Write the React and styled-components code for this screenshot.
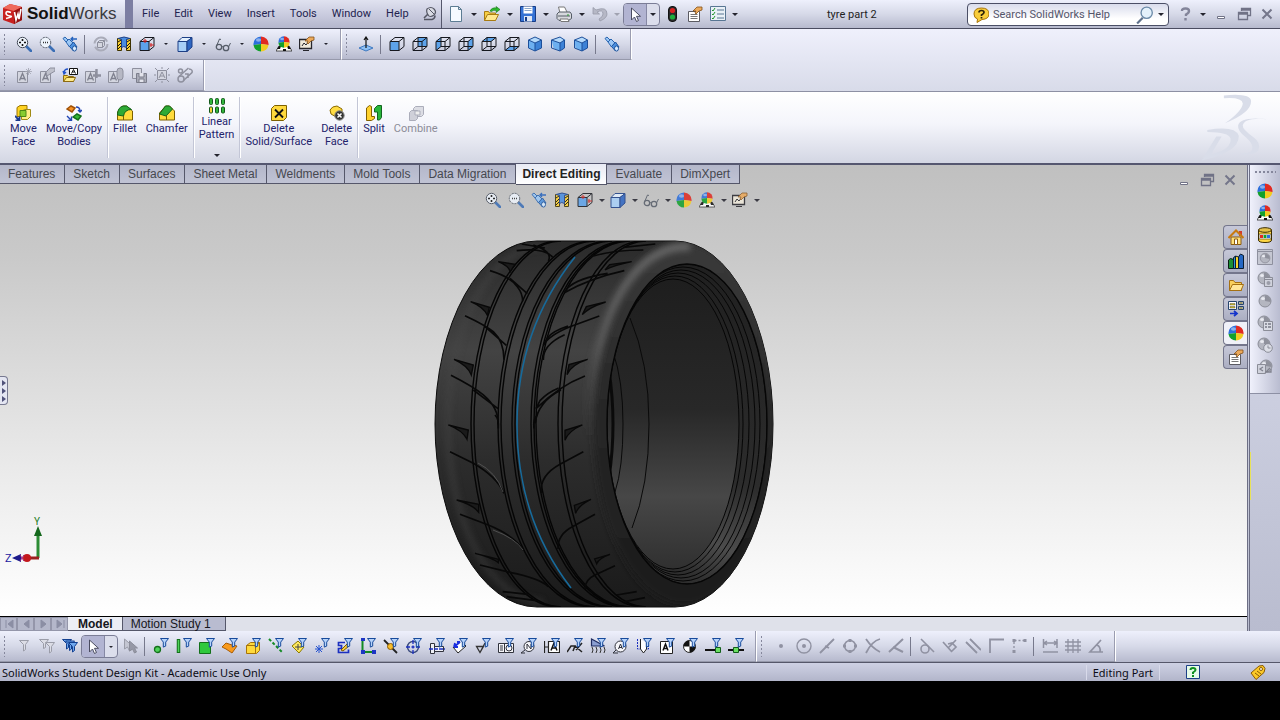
import React, { useState } from 'react';
import styled, { createGlobalStyle, css } from 'styled-components';

const GlobalStyle = createGlobalStyle`
  * {
    box-sizing: border-box;
  }
  body {
    margin: 0;
    background: #000;
    font-family: Roboto, "Noto Sans", sans-serif;
    font-size: 11px;
    color: #23234f;
  }
  button, input {
    font: inherit;
    color: inherit;
  }
`;

const barGradient = 'linear-gradient(#eef0fc, #d6d9e8 50%, #b7bace)';

const Page = styled.div`
  display: flex;
  flex-direction: column;
  min-height: 100vh;
  padding-bottom: 40px;
`;

const TitleBar = styled.header`
  display: flex;
  height: 29px;
  background: ${barGradient};
  border-bottom: 1px solid #4a4c60;
`;

const Brand = styled.div`
  display: flex;
  align-items: center;
  gap: 4px;
  width: 133px;
  padding-left: 2px;
  border-right: 8px solid #7c7ea2;
  font-family: "Liberation Sans", Arial, sans-serif;
  font-size: 17px;
  color: #3a3a40;

  b {
    color: #111;
  }
`;

const MenuBar = styled.nav`
  display: flex;
  align-items: center;
  gap: 1px;
  width: 309px;
  padding-left: 2px;
  background: linear-gradient(#e0e2f0, #c6c8dc 60%, #b4b6cc);
  border-right: 1px solid #55576c;
`;

const MenuItem = styled.button`
  padding: 0 7px;
  border: 0;
  background: none;
  line-height: 28px;
`;

const PinButton = styled.button`
  display: flex;
  padding: 0;
  border: 0;
  background: none;
  margin-left: auto;
  margin-right: 4px;
`;

const QuickBar = styled.div`
  display: flex;
  align-items: center;
  padding-left: 2px;
`;

const IconButton = styled.button`
  display: flex;
  flex: none;
  align-items: center;
  justify-content: center;
  width: 23px;
  height: 22px;
  padding: 0;
  border: 0;
  background: none;
`;

const DropButton = styled.button`
  display: flex;
  flex: none;
  align-items: center;
  justify-content: center;
  width: ${props => props.$width || 15}px;
  height: 22px;
  padding: 0;
  border: 0;
  background: none;

  &::after {
    content: '';
    border: ${props => (props.$small ? 2 : 3)}px solid transparent;
    border-bottom: 0;
    border-top-color: ${props => (props.$muted ? '#a0a2b0' : '#24242e')};
  }
`;

const SelectGroup = styled.div`
  display: flex;
  width: 37px;
  height: 23px;
  border: 1px solid #7b7d96;
  border-radius: 4px;
  background: #dcdeec;
  overflow: hidden;

  ${IconButton} {
    background: #b2b4d2;
    border-right: 1px solid #8688a4;
  }
`;

const DocTitle = styled.h1`
  flex: 1;
  margin: 0;
  padding-left: 86px;
  line-height: 29px;
  font-size: 11px;
  font-weight: 400;
  color: #222;
`;

const SearchBox = styled.label`
  display: flex;
  align-items: center;
  align-self: flex-start;
  width: 202px;
  height: 23px;
  margin-top: 3px;
  padding-left: 5px;
  border: 1px solid #4b4f66;
  border-radius: 4px;
  background: linear-gradient(#d9dcec, #fff 70%);

  input {
    flex: 1;
    min-width: 0;
    padding: 0 0 0 4px;
    border: 0;
    background: none;
    outline: 0;
  }
  input::placeholder {
    color: #55566a;
    opacity: 1;
  }
`;

const WindowButtons = styled.div`
  display: flex;
  align-items: center;
  padding-left: 4px;
  padding-right: 2px;
`;

const Dock = styled.div`
  background: linear-gradient(#eff0fc, #d8dbe9);
  border-bottom: 1px solid #8d90a4;
`;

const DockRow = styled.div`
  display: flex;
  height: 31px;
`;

const Toolbar = styled.div`
  display: flex;
  align-items: center;
  padding-right: ${props => props.$end || 8}px;
  background: ${barGradient};
  border-right: 1px solid #fff;
  border-bottom: 1px solid #9699ab;
  box-shadow: inset -1px 0 #9a9cb0;
`;

const Grip = styled.span`
  width: 12px;
  height: 22px;
  background: radial-gradient(circle, #85879c 1px, transparent 1px) 2px 0 / 5px 4px repeat-y;
`;

const Separator = styled.span`
  width: 8px;
  height: 19px;
  background: linear-gradient(#77798c, #77798c) 3px 0 / 1px 100% no-repeat;
`;

const Ribbon = styled.div`
  display: flex;
  height: 73px;
  padding-left: 6px;
  background: linear-gradient(#fff, #f4f5fb 45%, #d3d6e3);
  border-bottom: 2px solid #555770;
`;

const RibbonButton = styled.button`
  display: flex;
  flex-direction: column;
  align-items: center;
  gap: 1px;
  padding: ${props => (props.$tall ? 6 : 13)}px 5px 0 4px;
  border: 0;
  background: none;
  line-height: 13px;
  white-space: pre;
  text-align: center;
  color: #23236b;

  &:disabled {
    color: #8c8c98;
  }
`;

const RibbonArrow = styled.span`
  margin-top: 12px;
  border: 3px solid transparent;
  border-top-color: #24242e;
`;

const RibbonDivider = styled.span`
  width: 2px;
  margin: 5px 0;
  background: linear-gradient(to right, #c3c6d6 1px, #fff 1px);
`;

const Watermark = styled.svg`
  margin-left: auto;
  margin-right: 8px;
`;

const Workspace = styled.main`
  display: flex;
  flex: 1;
`;

const ModelColumn = styled.div`
  display: flex;
  flex-direction: column;
  flex: 1;
  min-width: 0;
`;

const Viewport = styled.section`
  display: flex;
  flex-direction: column;
  flex: 1;
  background: linear-gradient(#c0c0c0, #c9c9c9 20%, #ececec 70%, #fff);
`;

const TabRow = styled.div`
  display: flex;
  align-items: flex-start;
  height: 24px;
`;

const CommandTab = styled.button`
  height: 19px;
  padding: 0 9px 0 8px;
  border: 1px solid #55576a;
  border-width: 0 1px 1px 0;
  background: linear-gradient(#b4b7ca, #c0c3d4);
  font-family: "Liberation Sans", Arial, sans-serif;
  font-size: 12px;
  line-height: 17px;
  color: #46484f;
  white-space: nowrap;

  ${props => props.$active && css`
    height: 21px;
    padding: 0 6px;
    margin-top: -1px;
    background: linear-gradient(#e8eaf4, #fff);
    font-weight: 700;
    line-height: 19px;
    color: #222;
  `}
`;

const ModelWindowButtons = styled.div`
  display: flex;
  margin-left: auto;
  padding: 4px 6px 0 0;
`;

const HeadsUpBar = styled.div`
  display: flex;
  align-items: center;
  justify-content: center;
  height: 22px;
  padding-right: 4px;
  opacity: 0.85;
`;

const Scene = styled.div`
  display: flex;
  flex: 1;
`;

const SceneEdge = styled.div`
  display: flex;
  flex-direction: column;
  justify-content: space-between;
  width: 44px;
  padding: 165px 0 52px;
`;

const PanelHandle = styled.button`
  display: flex;
  flex-direction: column;
  align-items: center;
  justify-content: center;
  gap: 2px;
  width: 8px;
  height: 29px;
  padding: 0;
  border: 1px solid #777991;
  border-left: 0;
  border-radius: 0 4px 4px 0;
  background: #e4e6f2;

  span {
    border: 3px solid transparent;
    border-left: 4px solid #50527a;
    border-right: 0;
  }
`;

const Stage = styled.div`
  display: flex;
  flex: 1;
  align-items: flex-end;
  justify-content: center;
  padding: 24px 57px 6px 0;
`;

const SideTabs = styled.div`
  display: flex;
  flex-direction: column;
  width: 24px;
  padding-top: 14px;
`;

const SideTab = styled.button`
  display: flex;
  align-items: center;
  justify-content: center;
  width: 24px;
  height: 24px;
  padding: 0;
  border: 1px solid #74768c;
  border-right: 0;
  border-radius: 4px 0 0 4px;
  background: ${props => (props.$active ? '#f0f1f8' : 'linear-gradient(#c6c8d8, #abaec2)')};
`;

const StudyRow = styled.div`
  display: flex;
  height: 15px;
  background: #dfe1ea;
  border-top: 1px solid #000;
`;

const StudyNav = styled.button`
  display: flex;
  align-items: center;
  justify-content: center;
  width: 17px;
  height: 14px;
  padding: 0;
  border: 1px solid #9496aa;
  background: #b4b7ca;
`;

const StudyTab = styled.button`
  height: 14px;
  padding: 0 ${props => (props.$active ? 9 : 14)}px 0 ${props => (props.$active ? 10 : 8)}px;
  border: 1px solid #55576a;
  border-width: 0 1px 1px 0;
  background: ${props => (props.$active ? '#eceef5' : '#b9bcd0')};
  font-family: "Liberation Sans", Arial, sans-serif;
  font-size: 12px;
  font-weight: ${props => (props.$active ? 700 : 400)};
  line-height: 12px;
  color: #16161c;
`;

const RenderPanel = styled.aside`
  width: 33px;
  border-left: 3px double #6c6e84;
  background: linear-gradient(#dee1f0, #b9bccf);
`;

const RenderTools = styled.div`
  display: flex;
  flex-direction: column;
  align-items: center;
  height: 229px;
  padding-top: 5px;
  background: linear-gradient(to right, #f0f1fc, #b9bcd0);
  border-bottom: 1px solid #8d90a4;
`;

const RenderGrip = styled.span`
  width: 22px;
  height: 5px;
  margin-bottom: 5px;
  background: radial-gradient(circle, #85879c 1px, transparent 1px) 0 0 / 4px 4px repeat-x;
`;

const HintEdge = styled.div`
  width: 1px;
  height: 48px;
  margin-top: 58px;
  background: #e8e25a;
`;

const BottomBar = styled.div`
  display: flex;
  height: 31px;
  background: ${barGradient};
`;

const StatusBar = styled.footer`
  display: flex;
  align-items: center;
  height: 19px;
  padding: 0 14px 0 2px;
  border-top: 1px solid #55576a;
  background: linear-gradient(#ced1e4, #b2b5ca);
  font-family: "Noto Sans", sans-serif;
  color: #0c0c14;
`;

const StatusMode = styled.span`
  margin-left: auto;
  padding: 0 6px;
  border: 1px solid #d8daea;
  border-width: 0 1px;
`;

const StatusIcon = styled.button`
  display: flex;
  padding: 0;
  border: 0;
  background: none;
  margin-left: ${props => props.$gap}px;
`;

// ---- shared icon parts ----

const Glass = ({ dashed }) => (
  <>
    <path d="M10 10l5 5" stroke="#3a6eb5" strokeWidth="2.6" strokeLinecap="round" />
    <circle cx="6.5" cy="6.5" r="5.2" fill="#eef4fc" stroke="#444b58" strokeDasharray={dashed ? '2 1' : undefined} />
  </>
);

const Funnel = () => (
  <path d="M7.500 .5h8l-2.800 3.600v4l-2.400 1v-5z" fill="#b5d2fa" stroke="#174a9c" />
);

const Sphere = () => (
  <>
    <path d="M8 8V.5A7.500 7.500 0 0 0 .5 9z" fill="#2c6fdc" />
    <path d="M8 8V.5A7.500 7.500 0 0 1 15.500 9z" fill="#e02a22" />
    <path d="M8 8L.5 9A7.500 7.500 0 0 0 8 15.500z" fill="#12a02c" />
    <path d="M8 8l7.500 1A7.500 7.500 0 0 1 8 15.500z" fill="#f2cc20" />
    <ellipse cx="5.500" cy="4" rx="2.600" ry="1.800" fill="#fff" opacity=".45" />
  </>
);

const SceneSphere = () => (
  <>
    <path d="M0 15l3-5h10l3 5z" fill="#fff" stroke="#111" strokeWidth=".7" />
    <path d="M3 10h2l-1 3H1zM7 13h3v2H7zM11 10h2l2 3h-3z" fill="#111" />
    <g transform="translate(2 0) scale(.75)"><Sphere /></g>
  </>
);

const GreySphere = () => (
  <>
    <circle cx="7" cy="7" r="6" fill="#b4b6c0" stroke="#8b8d98" />
    <path d="M7 7V1.500A5.500 5.500 0 0 1 12.500 8z" fill="#8f919c" />
    <ellipse cx="5" cy="4.500" rx="2" ry="1.500" fill="#e9eaf0" />
  </>
);

const cubeFaces = {
  front: 'M1 5.500h9v9H1z',
  back: 'M6 1.500h9v9H6z',
  left: 'M1 5.500l5-4v9l-5 4z',
  right: 'M10 5.500l5-4v9l-5 4z',
  top: 'M1 5.500l5-4h9l-5 4z',
  bottom: 'M1 14.500l5-4h9l-5 4z',
};

const WireCube = ({ face }) => (
  <>
    <path d={cubeFaces[face]} fill="#5da3ea" />
    <path d="M1 5.500h9v9H1zM6 1.500h9v9M1 5.500l5-4M10 5.500l5-4M10 14.500l5-4" fill="none" stroke="#16181f" />
    {face !== 'front' && <path d="M6 1.500v9h9M1 14.500l5-4" fill="none" stroke="#16181f" />}
  </>
);

const IsoCube = ({ x = 8 }) => (
  <>
    <path d={`M1.500 4L${x} 1l6.500 3L${x} 7z`} fill="#b5dafb" />
    <path d={`M1.500 4L${x} 7v8l-6.500-3z`} fill="#6db0f0" />
    <path d={`M14.500 4L${x} 7v8L14.500 12z`} fill="#3d82d6" />
    <path d={`M1.500 4L${x} 1L14.500 4v8L${x} 15L1.500 12zM1.500 4L${x} 7L14.500 4M${x} 7v8`} fill="none" stroke="#1d4f9a" />
  </>
);

const Telescope = () => (
  <>
    <path d="M1 2.500L3 1l3 3-2 2zM4 6l3-3 4 4-3.500 4z" fill="#9cc8f6" stroke="#2a65b0" />
    <path d="M7.500 10.500l4-4.500L15 11l-3.500 4z" fill="#4c91e0" stroke="#1e559e" />
    <ellipse cx="12.500" cy="12.500" rx="2" ry="2.600" fill="#d7ebff" stroke="#1e559e" />
  </>
);

const NoteBox = ({ x = 1, y = 4 }) => (
  <>
    <path d={`M${x + 0.5} ${y + 0.5}h10v11h-10z`} fill="#d4d6e0" stroke="#8e909e" />
    <path d={`M${x + 2.5} ${y + 9.5}l3-7 3 7M${x + 3.5} ${y + 7.500}h4`} fill="none" stroke="#7e808e" strokeWidth="1.300" />
  </>
);

const Hand = () => (
  <path d="M6 5l4-4h5v3l-3 1-3 3-1-1 1-2z" fill="#eba95a" stroke="#83501a" strokeWidth=".8" />
);

const Cursor = () => (
  <path d="M4.500 1v12l3-3 2 4.500 2-1-2-4.200h4z" fill="#fff" stroke="#4a4c60" />
);

const icons = {
  zoomFit: <><Glass /><path d="M6.500 3v2M6.500 8v2M3 6.500h2M8 6.500h2" stroke="#111" strokeWidth="1.600" /></>,
  zoomArea: <><Glass dashed /><path d="M4 6.500h1M6 6.500h1M8 6.500h1" stroke="#333" strokeWidth="1.500" /></>,
  previousView: <><Telescope /><path d="M9 3h6M11 1L9 3l2 2" fill="none" stroke="#2362bd" strokeWidth="1.400" /></>,
  rotateView: <><circle cx="8" cy="8" r="6.500" fill="none" stroke="#a9abb8" strokeWidth="2" strokeDasharray="17 3.400" /><path d="M4.500 6.500l2-2h5v5l-2 2h-5z" fill="#d5d7e0" stroke="#8e909e" /><path d="M4.500 6.500h5v5M9.500 6.500l2-2" fill="none" stroke="#8e909e" /></>,
  section: <><path d="M1.500 2.500h4v12h-4zM10.500 2.500h4v12h-4z" fill="#ffd22e" stroke="#3e3200" /><path d="M2 6l3-2M2 10l3-3M2 13l3-3M11 6l3-2M11 10l3-3M11 13l3-3" stroke="#111" /><path d="M2 2.500q6-3 12 0l-3.500 1v8q-3-2-5 0v-8z" fill="#4a8de0" stroke="#1c3f86" /></>,
  orientation: <><WireCube face="front" /><path d="M6 3v4M4 5h4M12 7v4M11 9h4" stroke="#d01c1c" /></>,
  shaded: <><path d="M1 5.500h9v10H1z" fill="#a8d0f8" stroke="#1c3f86" /><path d="M1 5.500l4-4h10l-5 4z" fill="#e3f0fe" stroke="#1c3f86" /><path d="M10 5.500l5-4v9.500l-5 4.500z" fill="#2e66c2" stroke="#1c3f86" /></>,
  glasses: <><circle cx="4" cy="11" r="2.700" fill="none" stroke="#555c68" strokeWidth="1.300" /><circle cx="11" cy="12" r="2.700" fill="none" stroke="#555c68" strokeWidth="1.300" /><path d="M1.500 10L4.500 3l1.500.5M6.500 11q1-1 2 0M13.500 11l2-4" fill="none" stroke="#555c68" /></>,
  sphere: <Sphere />,
  sceneSphere: <SceneSphere />,
  viewSettings: <><path d="M.5 3.500h12v9H.5z" fill="#f0eadb" stroke="#26262c" strokeWidth="1.300" /><path d="M4 14.500h6M3 10l2-3 2 2 3-4" fill="none" stroke="#26262c" /><Hand /></>,
  normalTo: <><path d="M1 12l7-3 7 3-7 3z" fill="#8dc0f5" stroke="#3d78c0" /><path d="M8 12V2M6 4l2-3 2 3" fill="none" stroke="#111" strokeWidth="1.200" /></>,
  front: <WireCube face="front" />,
  back: <WireCube face="back" />,
  left: <WireCube face="left" />,
  right: <WireCube face="right" />,
  top: <WireCube face="top" />,
  bottom: <WireCube face="bottom" />,
  isometric: <IsoCube />,
  trimetric: <IsoCube x={10} />,
  dimetric: <IsoCube x={9} />,
  telescope: <Telescope />,
  noteNew: <><NoteBox /><path d="M12.500 1v7M9 4.500h7M10 2l5 5M15 2l-5 5" stroke="#a0a2ae" strokeWidth=".8" /></>,
  noteEdit: <><NoteBox /><path d="M7 5l4-4h5v3l-5 3-3 2z" fill="#bfc1cc" stroke="#8e909e" /></>,
  noteOpen: <><path d="M7.500 1.500h8v6h-8z" fill="#fff" stroke="#111" /><path d="M9.500 6.500l2-4 2 4M10.500 5h2" fill="none" stroke="#111" /><path d="M2 6q0-4 4-4M1 4l1 3 2-2" fill="none" stroke="#2152c8" strokeWidth="1.300" /><path d="M1.500 14.500v-6h4l1 1h5v5z" fill="#f8d54a" stroke="#8d6b10" /><path d="M1.500 14.500l3-4h9l-2 4z" fill="#ffeb8a" stroke="#8d6b10" /></>,
  noteAdd: <><NoteBox x={0} /><path d="M11.500 2v9M8 8.500h8" stroke="#8e909e" strokeWidth="2.400" /></>,
  noteLink: <><NoteBox x={0} /><rect x="9" y="1" width="6" height="12" rx="3" fill="#b6b8c4" stroke="#8e909e" /></>,
  noteSave: <><path d="M1.500 1.500h9v10h-9z" fill="#d4d6e0" stroke="#8e909e" /><path d="M5.500 6.500h10v9h-10z" fill="#aaacb8" stroke="#7c7e8c" /><path d="M8 6v4h5V6M8 15v-3h5v3" fill="#e3e4ec" stroke="#7c7e8c" /></>,
  noteSelect: <><path d="M3.500 3.500h9v9h-9z" fill="#d4d6e0" stroke="#8e909e" /><path d="M5 11l3-6 3 6M6 9h4M1 1l2 2M15 1l-2 2M1 15l2-2M15 15l-2-2M8 0v2M8 14v2M0 8h2M14 8h2" fill="none" stroke="#8e909e" /></>,
  noteChain: <><circle cx="4" cy="12" r="3" fill="none" stroke="#8e909e" strokeWidth="1.500" /><circle cx="3.500" cy="4" r="2" fill="none" stroke="#8e909e" strokeWidth="1.500" /><path d="M2 9.500L11.500 1M6.500 13.500L15 5.500q1-3-3-3.500M8 7h3v4" fill="none" stroke="#8e909e" strokeWidth="1.500" /></>,
  pin: <><path d="M6 3q4-3 7 0t0 6q-4 3-6 0t-1-6z" fill="#d9dbe4" stroke="#555764" strokeWidth="1.200" /><path d="M8 3l5 5" stroke="#555764" /><path d="M7 8l-4 4M3 13.500h8q3-1 3-4" fill="none" stroke="#555764" strokeWidth="1.600" /></>,
  newDoc: <path d="M2.500 .5h8l3 3v12h-11zM10.500 .5v3h3" fill="#f5faff" stroke="#5c7c93" />,
  open: <><path d="M.5 14.500v-9h4l1 1.500h6v7.500z" fill="#f7cf45" stroke="#a87b12" /><path d="M.5 14.500l3-6h11l-3 6z" fill="#ffe88e" stroke="#a87b12" /><path d="M6 5q2-4 7-3l-1-1.500 4 3-4 3 .5-2q-3-1-5 1z" fill="#2dbb2d" stroke="#127212" strokeWidth=".6" /></>,
  save: <><path d="M.5 .5h15v15h-15z" fill="#3572d4" stroke="#173c86" /><path d="M3.500 .5h9v7h-9z" fill="#fff" /><path d="M4.500 2.500h7M4.500 4.500h7" stroke="#8da6c8" /><path d="M4 10h8v5.500H4z" fill="#dfe7f4" /><path d="M5 11h2v4H5z" fill="#173c86" /></>,
  print: <><path d="M4 7l-1.500-6h6l3 6z" fill="#fff" stroke="#777" /><path d="M1 8l2-2h11l1.500 2v4.500l-3 2H3L1 12.500z" fill="#d6d8dd" stroke="#555c66" /><path d="M2 10h12" stroke="#555c66" /><path d="M4 13h8l1 2.500H5z" fill="#fff" stroke="#777" /><path d="M11 9h2" stroke="#2b9c2b" /></>,
  undo: <path d="M1 1.500v6.500h6.500L5 6q6-3 6 2 0 3-4 5l1 2q7-3 7-7 0-8-11-4z" fill="#b6b8c6" stroke="#9799a8" strokeWidth=".8" />,
  cursor: <Cursor />,
  traffic: <><rect x="4.500" y=".5" width="8" height="15" rx="3.500" fill="#2b2b2b" stroke="#111" /><circle cx="8.500" cy="4.500" r="2.600" fill="#d82222" /><circle cx="8.500" cy="11" r="2.600" fill="#1fae3c" /></>,
  properties: <><path d="M1.500 5.500h11v10h-11z" fill="#fff" stroke="#5b5b62" /><path d="M3.500 8.500h7M3.500 10.500h7M3.500 12.500h7" stroke="#777" /><Hand /></>,
  options: <><path d="M.5 .5h15v14H.5z" fill="#e9f0f7" stroke="#587693" /><path d="M2 4l1 1 2-3M2 8l1 1 2-3M2 12l1 1 2-3" fill="none" stroke="#21962d" /><path d="M7 4h7M7 8h7M7 12h7" stroke="#587693" /></>,
  helpBubble: <><path d="M1 7Q1 1 8.500 1T16 7q0 5-7 5.500l-5 3 .5-3.500Q1 11 1 7z" fill="#f8cd3b" stroke="#a87408" /><path d="M6 5.500q0-2 2.500-2t2.500 2q0 1-2.500 2.500v1M8.500 10v1.500" fill="none" stroke="#2b220a" strokeWidth="1.700" /></>,
  search: <><path d="M6 10.500L1 15.500" stroke="#60728c" strokeWidth="2" /><circle cx="9.500" cy="6" r="5" fill="#e4f1fb" stroke="#6b8aa8" strokeWidth="1.200" /></>,
  question: <path d="M5 5q0-2.500 3.500-2.500T12 5q0 2-3 3.500V10M8.500 12v2.500" fill="none" stroke="#83859a" strokeWidth="2.400" />,
  minimize: <path d="M4.500 10.500h7v2h-7z" fill="#fff" stroke="#707286" />,
  restore: <path d="M5.500 5V2.500h9v7H12M5.500 4h9M2.500 6.500h9v7h-9zM2.500 8h9" fill="none" stroke="#707286" strokeWidth="1.300" />,
  close: <path d="M3.500 3.500l9 9M12.500 3.500l-9 9" stroke="#74768a" strokeWidth="2" />,
  moveFace: <><path d="M2 2.500l3-2h7v8l-3 3H2z" fill="#ffd322" stroke="#9a7400" /><path d="M6.500 6.500l3-2h6v7l-3 3h-6z" fill="#ffee88" stroke="#a08a15" /><path d="M5 5.500h6v6H5z" fill="#86cc30" stroke="#4e8815" /><path d="M0 11l4 4M4.500 11.500v4h-4" fill="none" stroke="#18388c" strokeWidth="1.800" /></>,
  moveBodies: <><path d="M1 4l4-3 4 2-3 4z" fill="#f79225" stroke="#a05208" strokeWidth="1.500" /><path d="M7 12l4-3 4 2-3 4z" fill="#35b637" stroke="#13701a" strokeWidth="1.500" /><path d="M10 2q4 0 4 4M12 5l2 2 2-2M1 11l4 4M5.500 11.500v4h-4" fill="none" stroke="#2146b4" strokeWidth="1.400" /></>,
  fillet: <><path d="M.5 15V7l5-6h4l6 5v9z" fill="#ffdb3c" stroke="#7d6000" /><path d="M.5 10q0-8 6-9h3l5 3.500q-7 0-8 6.500z" fill="#2faa35" stroke="#13651a" /><path d="M6.500 11V15" stroke="#7d6000" /></>,
  chamfer: <><path d="M.5 15V8l6-7h4l5 5v9z" fill="#ffdb3c" stroke="#7d6000" /><path d="M.5 9l6-8h4l3 3-6.500 7z" fill="#2faa35" stroke="#13651a" /><path d="M7.500 10.500V15" stroke="#7d6000" /></>,
  linearPattern: <>{[1, 7, 13].map(x => <React.Fragment key={x}><rect x={x - 0.5} y=".5" width="3" height="6" rx="1" fill="#31b53b" stroke="#14591b" /><rect x={x - 0.5} y="9" width="3" height="6" rx="1" fill={x === 1 ? '#f8d331' : '#31b53b'} stroke="#14591b" /></React.Fragment>)}</>,
  deleteSolid: <><path d="M.5 3.500l3-3h12v12l-3 3H.5z" fill="#ffd93c" stroke="#7d6000" /><path d="M4 4.500l8 8M12 4.500l-8 8" stroke="#111" strokeWidth="1.800" /></>,
  deleteFace: <><path d="M1 5q2-4 7-4l5 3v6l-4 3-7-4z" fill="#ffdc42" stroke="#8b6a00" /><circle cx="10.500" cy="10.500" r="4.700" fill="#333" stroke="#888" /><path d="M8.500 8.500l4 4M12.500 8.500l-4 4" stroke="#fff" strokeWidth="1.500" /></>,
  split: <><path d="M.5 3l3-2.500 2 1v10h3v2l-3 2h-5z" fill="#ffd22e" stroke="#836000" /><path d="M8.500 3.500l3-3h4v12l-2 2.500h-2V7h-3z" fill="#28b53a" stroke="#126520" /></>,
  combine: <><path d="M5.500 3.500l2-2h8v8l-2 2h-8z" fill="#dcdde4" stroke="#abadba" /><path d="M1.500 7.500l2-2h6v8l-2 2h-6z" fill="#cfd0d9" stroke="#abadba" /><path d="M7 6h5v4H7z" fill="#eee" stroke="#abadba" /></>,
  home: <><path d="M3 8h10v7.500H3z" fill="#ffe07a" stroke="#8b5a10" /><path d="M11 2h3v5h-3z" fill="#d33b2c" /><path d="M.5 9L8 1.500 15.500 9" fill="none" stroke="#c87a10" strokeWidth="2" /><path d="M6.500 10h3v5.500h-3z" fill="#fff" stroke="#8b5a10" /></>,
  library: <><path d="M.5 7l2-1.500 3 1v9h-5z" fill="#1b8f37" stroke="#0a1c10" /><path d="M5.500 5l2-2 3 1v11.500h-5z" fill="#f6d32c" stroke="#0a1c30" /><path d="M5.500 5l2-2v12.500h-2z" fill="#2e9bd8" stroke="#0a1c30" /><path d="M10.500 4l2-3 3 1.500v13h-5z" fill="#2567c4" stroke="#0a1c30" /></>,
  folder: <><path d="M1.500 13.500v-10h4l1.500 2h6.500v8z" fill="#f8cf5d" stroke="#a57013" /><path d="M1.500 13.500l3-6h11l-2.500 6z" fill="#ffe699" stroke="#a57013" /></>,
  palette: <><path d="M.5 .5h8v8h-8zM10.500 .5h5v3h-5zM10.500 5.500h5v3h-5z" fill="#fff" stroke="#27456e" /><path d="M2 2.500h5v1.500H2zM2 5.500h5v1.500H2zM11.500 1.500h3v1h-3zM11.500 6.500h3v1h-3z" fill="#d8c22c" stroke="#333" strokeWidth=".4" /><path d="M2 12.500h6M6 10l3 2.500L6 15" fill="none" stroke="#1534cc" strokeWidth="1.700" /></>,
  bucket: <><path d="M1.500 3v10q0 2.500 6.500 2.500t6.500-2.500V3z" fill="#ffd845" stroke="#3b2c00" /><ellipse cx="8" cy="3" rx="6.500" ry="2.300" fill="#e3c04a" stroke="#3b2c00" /><path d="M2 7h12v5H2z" fill="#fff" stroke="#3b2c00" strokeWidth=".6" /><path d="M3 8h3v3H3z" fill="#e02a22" /><path d="M6.500 8h3v3h-3z" fill="#12a02c" /><path d="M10 8h3v3h-3z" fill="#2c6fdc" /></>,
  renderWindow: <><path d="M.5 .5h15v15H.5z" fill="#c5c7d2" stroke="#8e909e" /><path d="M.5 2.500h15" stroke="#8e909e" /><g transform="translate(2.500 3.500) scale(.8)"><GreySphere /></g></>,
  renderCopy: <><GreySphere /><path d="M7.500 6.500h8v9h-8zM7.500 8.500h8" fill="#d0d2dc" stroke="#8b8d98" /><circle cx="11.500" cy="12" r="2" fill="#9a9ca8" /></>,
  greySphere: <g transform="translate(1 1)"><GreySphere /></g>,
  renderList: <><GreySphere /><path d="M6.500 6.500h9v9h-9z" fill="#d9dbe4" stroke="#8b8d98" /><path d="M8 9h2M11 9h3M8 12h2M11 12h3" stroke="#777985" strokeWidth="1.400" /></>,
  renderTime: <><GreySphere /><circle cx="11" cy="11" r="4.300" fill="#dcdee6" stroke="#8b8d98" /><path d="M11 8.500V11h2.500" fill="none" stroke="#8b8d98" /></>,
  renderRecall: <><g transform="translate(2 0)"><GreySphere /></g><path d="M.5 5.500h8v9h-8z" fill="#d0d2dc" stroke="#8b8d98" /><path d="M13 9l-4 4h5v-3M6 8l-3 2 3 2" fill="none" stroke="#80828e" strokeWidth="1.300" /></>,
  funnelOff: <path d="M3.500 2.500h9L9.500 6.500v5l-2 1.500V6.500z" fill="#dcdde6" stroke="#9a9ca8" />,
  funnelsOff: <><path d="M.5 1.500h9l-3 4v4l-2 1v-5z" fill="#dcdde6" stroke="#9a9ca8" /><path d="M6.500 4.500h9l-3 4v5l-2 1.500V8.500z" fill="#dcdde6" stroke="#9a9ca8" /></>,
  funnels: <>{[0, 3, 6].map(d => <path key={d} d={`M${d + 0.5} ${d / 2 + 1.5}h9l-3 4v4l-2 1.500v-5.500z`} fill="#6fa8ee" stroke="#123f90" />)}</>,
  cursorsOff: <><path d="M2.500 1v10l3-2 2 4 2-1-2-4h3z" fill="#c4c6d2" stroke="#9a9ca8" /><path d="M7.500 3v10l3-2 2 4 2-1-2-4h3z" fill="#9698a6" stroke="#8b8d9a" /></>,
  fVertex: <><circle cx="4.500" cy="11.500" r="3" fill="#4fd25a" stroke="#13701a" strokeWidth="1.300" /><Funnel /></>,
  fEdge: <><path d="M2.500 1v14" stroke="#13701a" strokeWidth="3.500" /><path d="M2.500 2v12" stroke="#4fd25a" strokeWidth="1.500" /><Funnel /></>,
  fFace: <><path d="M.5 4.500h11v11h-11z" fill="#2fc83c" stroke="#13701a" /><Funnel /></>,
  fSurface: <><path d="M0 9l4-4 6 2 5 1-5 7-6-4z" fill="#f99a1c" stroke="#a85c05" /><Funnel /></>,
  fSolid: <><path d="M1.500 7.500l4-3h9v8l-3 3h-10z" fill="#ffd93c" stroke="#a87408" /><path d="M1.500 7.500h9v8M10.500 7.500l4-3" fill="none" stroke="#a87408" /><Funnel /></>,
  fAxis: <><path d="M1 1l14 14" stroke="#138a25" strokeWidth="2" strokeDasharray="3 2" /><Funnel /></>,
  fPlane: <><path d="M1 8l6-5 6 6-5 6z" fill="#ffe95c" stroke="#8b7800" /><path d="M4 9h6M7 6v6" stroke="#444" /><Funnel /></>,
  fPoint: <><path d="M5 7v8M1 11h8M2 8l6 6M8 8l-6 6" stroke="#2552d0" /><Funnel /></>,
  fSketch: <><path d="M8 4.500H1.500v3h3v3h-3v4h10v-3" fill="none" stroke="#1b2fc0" strokeWidth="1.700" /><path d="M4 12l6-6 2 2-6 5z" fill="#f8cd3b" stroke="#7d5a00" /><Funnel /></>,
  fSegment: <><path d="M2.500 1v13h12" fill="none" stroke="#138a25" strokeWidth="2" /><path d="M1 12h4v4H1zM12 12h4v4h-4zM1 0h4v3H1z" fill="#1d36c4" /><Funnel /></>,
  fMid: <><path d="M1 2l13 13" stroke="#222" strokeWidth="1.800" /><circle cx="7.500" cy="8.500" r="3" fill="#f8bd2b" stroke="#8b5a00" /><Funnel /></>,
  fCenter: <><circle cx="7" cy="9" r="5.500" fill="none" stroke="#394a7c" strokeWidth="1.400" /><path d="M0 9h4M5.500 9h3M10 9h4M7 2v4M7 7.500v3M7 12v4" stroke="#1b2fc0" strokeWidth="1.300" /><Funnel /></>,
  fCenterline: <><path d="M1.500 5.500h4v10h-4zM5.500 8.500h9v5h-9z" fill="#f0f1f7" stroke="#30323c" /><path d="M0 11h16" stroke="#1b2fc0" strokeDasharray="4 1" strokeWidth="1.300" /><Funnel /></>,
  fDim: <><path d="M1 9l5 6 8-7-4-4" fill="#fff" stroke="#222" /><path d="M2 9l6-5M2 9l1-4M2 9l4 0M8 4l-3 0" stroke="#1b2fe0" strokeWidth="1.800" /><Funnel /></>,
  fFinish: <><path d="M1.500 8.500h7l-3.500 6zM5 14.500L10 5" fill="none" stroke="#333" strokeWidth="1.300" /><Funnel /></>,
  fTolerance: <><path d="M.5 5.500h15v9H.5zM6.500 5.500v9" fill="#f6f6fa" stroke="#30323c" /><path d="M2 8h3M2 10h3M2 12h3" stroke="#30323c" /><circle cx="11" cy="10" r="3" fill="none" stroke="#30323c" /><Funnel /></>,
  fNote: <><circle cx="8" cy="8.500" r="5" fill="#f6f6fa" stroke="#30323c" /><path d="M6 11V6l4 5V6M4 12l-4 3h4" fill="none" stroke="#30323c" /><Funnel /></>,
  fDatum: <><path d="M4.500 3.500h11v11h-11zM.5 3v12M1 9h3" fill="#fff" stroke="#222" strokeWidth="1.200" /><path d="M7 12.500L10 5l3 7.500M8 10h4" fill="none" stroke="#111" strokeWidth="1.500" /><Funnel /></>,
  fWeld: <><path d="M0 14l4-6h4l-2 5M8 8l7 6M9 12l6-7" fill="none" stroke="#222" strokeWidth="1.500" /><Funnel /></>,
  fBead: <><path d="M1.500 1v7h13z" fill="#8b9ed0" stroke="#202c60" strokeWidth="1.200" /><path d="M2 15q2-3 0-6M6 15q2-3 0-6M10 15q2-3 0-6M14 15q2-3 0-6" fill="none" stroke="#333" /><Funnel /></>,
  fBalloon: <><circle cx="7.500" cy="8.500" r="5.500" fill="#f6f6fa" stroke="#30323c" /><path d="M5.500 11l2-5 2 5M6 9.500h3M3 12l-3 3h5" fill="none" stroke="#30323c" /><Funnel /></>,
  fCosmetic: <><path d="M1.500 1v10h3M12.500 7v4h-3" fill="none" stroke="#1b2fc0" strokeDasharray="2 1" /><path d="M4.500 1v10l3 4 3-4V5" fill="#fff" stroke="#222" /><Funnel /></>,
  fText: <><path d="M1.500 3.500h12v12h-12z" fill="#fff" stroke="#222" /><path d="M4 12.500L6.500 6 9 12.500M5 10.500h3" fill="none" stroke="#111" strokeWidth="1.500" /><Funnel /></>,
  fMass: <><circle cx="7.500" cy="8.500" r="6" fill="#fff" stroke="#222" /><path d="M7.500 8.500v-6a6 6 0 0 0-6 6zM7.500 8.500v6a6 6 0 0 0 6-6z" fill="#111" /><Funnel /></>,
  fRoute: <><path d="M0 12h11" stroke="#111" strokeWidth="2" /><path d="M10.500 9.500h5v5h-5z" fill="#6adf62" stroke="#13601a" /><Funnel /></>,
  fConnect: <><path d="M0 12h16" stroke="#111" strokeWidth="2" /><path d="M5.500 9.500h5v5h-5z" fill="#6adf62" stroke="#13601a" /><Funnel /></>,
  sPoint: <circle cx="8" cy="8" r="2" fill="#9092a2" />,
  sCenter: <><circle cx="8" cy="8" r="7" fill="none" stroke="#9092a2" strokeWidth="1.400" /><circle cx="8" cy="8" r="2" fill="#9092a2" /></>,
  sLine: <path d="M1 15L15 1M6 8l4 2" stroke="#9092a2" strokeWidth="1.800" />,
  sQuad: <><circle cx="8" cy="8" r="5.500" fill="none" stroke="#9092a2" strokeWidth="1.500" /><path d="M8 1v3M8 12v3M1 8h3M12 8h3" stroke="#9092a2" strokeWidth="3" /></>,
  sCross: <path d="M1 1q6 9 14 13M15 1q-8 2-14 14" fill="none" stroke="#9092a2" strokeWidth="1.800" />,
  sNear: <path d="M15 1L1 14M5 9l10 5" stroke="#9092a2" strokeWidth="2" />,
  sTangent: <><circle cx="6" cy="11" r="4" fill="none" stroke="#9092a2" strokeWidth="1.600" /><path d="M2 1l13 13" stroke="#9092a2" strokeWidth="1.600" /></>,
  sPerp: <path d="M1 4l9 10M14 2L6 10M6 6l4-1 4 4-4 4" fill="none" stroke="#9092a2" strokeWidth="1.700" />,
  sParallel: <path d="M1 4l11 11M5 1l11 11" stroke="#9092a2" strokeWidth="1.800" />,
  sCorner: <path d="M2 15V1.500h14" fill="none" stroke="#9092a2" strokeWidth="1.800" />,
  sDots: <><path d="M3 14V2.500h12" fill="none" stroke="#9092a2" strokeWidth="1.300" strokeDasharray="2 2" /><path d="M1.500 1h3v3h-3zM12.500 1h3v3h-3zM1.500 12h3v3h-3z" fill="#9092a2" /></>,
  sLength: <path d="M1.500 1v9M15 1v9M2 5h13M5 3L2 5l3 2M12 3l3 2-3 2M1 14h15" fill="none" stroke="#9092a2" strokeWidth="1.500" />,
  sGrid: <path d="M3 1v14M8 1v14M13 1v14M0 4h16M0 8h16M0 12h16" stroke="#9092a2" strokeWidth="1.300" />,
  sAngle: <path d="M15 14H2L13 2M9 7q4 2 3 7" fill="none" stroke="#9092a2" strokeWidth="1.700" />,
};

const Icon = ({ name, size = 16 }) => (
  <svg width={size} height={size} viewBox="0 0 16 16" fill="none" aria-hidden="true">{icons[name]}</svg>
);

// '|' draws a separator, 'v' a drop arrow
const Tools = ({ items, dropWidth, small }) => items.map((item, i) => {
  if (item === '|') return <Separator key={i} />;
  if (item === 'v') return <DropButton key={i} $width={dropWidth} $small={small} aria-label="More" />;
  return <IconButton key={i} aria-label={item}><Icon name={item} /></IconButton>;
});

const menus = ['File', 'Edit', 'View', 'Insert', 'Tools', 'Window', 'Help'];

const viewTools = ['zoomFit', 'zoomArea', 'previousView', '|', 'rotateView', 'section', 'orientation', 'v',
  'shaded', 'v', 'glasses', 'v', 'sphere', 'sceneSphere', 'viewSettings', 'v'];
const standardViews = ['normalTo', '|', 'front', 'back', 'left', 'right', 'top', 'bottom', 'isometric',
  'trimetric', 'dimetric', '|', 'telescope'];
const noteTools = ['noteNew', 'noteEdit', 'noteOpen', 'noteAdd', 'noteLink', 'noteSave', 'noteSelect', 'noteChain'];
const headsUp = ['zoomFit', 'zoomArea', 'previousView', 'section', 'orientation', 'v', 'shaded', 'v',
  'glasses', 'v', 'sphere', 'sceneSphere', 'v', 'viewSettings', 'v'];
const filters = ['fVertex', 'fEdge', 'fFace', 'fSurface', 'fSolid', 'fAxis', 'fPlane', 'fPoint', 'fSketch',
  'fSegment', 'fMid', 'fCenter', 'fCenterline', 'fDim', 'fFinish', 'fTolerance', 'fNote', 'fDatum', 'fWeld',
  'fBead', 'fBalloon', 'fCosmetic', 'fText', 'fMass', 'fRoute', 'fConnect'];
const snaps = ['sPoint', 'sCenter', 'sLine', 'sQuad', 'sCross', 'sNear', '|', 'sTangent', 'sPerp', 'sParallel',
  'sCorner', 'sDots', '|', 'sLength', 'sGrid', 'sAngle'];
const renderTools = ['sphere', 'sceneSphere', 'bucket', 'renderWindow', 'renderCopy', 'greySphere',
  'renderList', 'renderTime', 'renderRecall'];
const sideTabs = ['home', 'library', 'folder', 'palette', 'sphere', 'properties'];

const ribbon = [
  { icon: 'moveFace', label: 'Move\nFace' },
  { icon: 'moveBodies', label: 'Move/Copy\nBodies' },
  null,
  { icon: 'fillet', label: 'Fillet' },
  { icon: 'chamfer', label: 'Chamfer' },
  null,
  { icon: 'linearPattern', label: 'Linear\nPattern', menu: true },
  null,
  { icon: 'deleteSolid', label: 'Delete\nSolid/Surface' },
  { icon: 'deleteFace', label: 'Delete\nFace' },
  null,
  { icon: 'split', label: 'Split' },
  { icon: 'combine', label: 'Combine', disabled: true },
];

const tabs = ['Features', 'Sketch', 'Surfaces', 'Sheet Metal', 'Weldments', 'Mold Tools', 'Data Migration',
  'Direct Editing', 'Evaluate', 'DimXpert'];

// circumferential tread line: x is its leftmost point on the horizontal mid line
const treadLine = (x, r, ry = 183) => `M${x + r} ${424 - ry}A${r} ${ry} 0 0 0 ${x + r} ${424 + ry}`;

const grooves = [[471, 87], [474, 87], [498, 94], [501, 94], [512, 97], [515, 97], [531, 94], [534, 94],
  [536, 94], [558, 84], [562, 84]];

const upperLines = [
  'M180 122q60 18 82 48 16 20 16 44M240 145l52 46',
  'M105 257q60 28 85 48 32 30 32 84M165 290l64 56',
  'M63 436q67 34 97 59 47 40 44 88M130 480l74 56',
  'M275 42l70 12M260 62q85-10 108 20M310 45q60 20 45 48',
  'M583 122q-100 22-180 66l10-14q30-30 120-44',
  'M508 258l-88 32q-64 26-80 56l12-22q14-20 62-36M340 390q-2-46 64-76',
  'M465 438q-78 30-147 98l12-24q22-24 56-38M315 580q10-66 78-100',
  'M676 42l-96 10M640 60q-90 0-150 18',
];
const upperSpurs = [
  'M205 95l50 8-14 22q-6-18-36-30z',
  'M122 215l56 17-6 24q-10-24-50-41z',
  'M72 388l58 17-6 30q-10-28-52-47z',
  'M605 95l-66 9-14 16q26-14 80-25z',
  'M527 216l-58 14-12 24q20-22 70-38z',
  'M473 388l-56 16-6 30q12-30 62-46z',
];

const lowerLines = [
  'M60 110l70 35q70 40 92 90M195 0q12 12 10 40',
  'M90 298l85 32q75 30 105 75',
  'M150 450l90 22q90 18 115 43',
  'M218 530l76 8M230 545l90 12',
  'M460 110l-70 38q-62 34-56 86M322 0q-14 14-10 40',
  'M495 298l-65 36q-48 24-46 68',
  'M555 452l-60 28q-30 14-30 42',
  'M620 530l-60 10M645 548l-60 12',
];
const lowerSpurs = [
  'M55 30l60 15-4 28q-12-26-56-43z',
  'M80 255l66 13v24q-16-22-66-37z',
  'M135 415l70 18v10q-20-16-70-28z',
  'M457 30l-52 16v30q10-28 52-46z',
  'M483 253l-50 18 4 24q8-24 46-42z',
  'M540 418l-46 14 6 14q6-16 40-28z',
];

// inner bead rings, from the widest to the opening: [cx, rx, ry]
const rings = [[687, 80, 160], [683, 77, 157], [681, 74, 154], [678, 71, 151], [675, 68, 148], [673, 66, 145]];

const Tyre = () => (
  <svg width="350" height="375" viewBox="430 235 350 375" role="img" aria-label="tyre part 2">
    <defs>
      <linearGradient id="tread" x1="0" y1="0" x2="0" y2="1">
        <stop offset="0" stopColor="#2a2a2a" />
        <stop offset=".3" stopColor="#434343" />
        <stop offset=".6" stopColor="#2c2c2c" />
        <stop offset="1" stopColor="#1a1a1a" />
      </linearGradient>
      <linearGradient id="wall" x1="0" y1="0" x2="0" y2="1">
        <stop offset="0" stopColor="#3a3a3a" />
        <stop offset=".5" stopColor="#262626" />
        <stop offset="1" stopColor="#1c1c1c" />
      </linearGradient>
      <linearGradient id="bore" x1="0" y1="0" x2="0" y2="1">
        <stop offset="0" stopColor="#1e1e1e" />
        <stop offset=".45" stopColor="#282828" />
        <stop offset=".75" stopColor="#474747" />
        <stop offset="1" stopColor="#303030" />
      </linearGradient>
      <linearGradient id="bead" x1="0" y1="0" x2="0" y2="1">
        <stop offset="0" stopColor="#202020" />
        <stop offset=".7" stopColor="#2c2c2c" />
        <stop offset=".9" stopColor="#4c4c4c" />
        <stop offset="1" stopColor="#2c2c2c" />
      </linearGradient>
      <linearGradient id="shine" x1="0" y1="0" x2="0" y2="1">
        <stop offset="0" stopColor="#666" />
        <stop offset=".5" stopColor="#585858" />
        <stop offset="1" stopColor="#383838" stopOpacity="0" />
      </linearGradient>
      <filter id="soft" x="-20%" y="-20%" width="140%" height="140%">
        <feGaussianBlur stdDeviation="3" />
      </filter>
      <clipPath id="body">
        <path d="M537 241H675A98 183 0 0 1 675 607H537A102 183 0 0 1 537 241z" />
      </clipPath>
      <clipPath id="hole">
        <ellipse cx="687" cy="424" rx="80" ry="160" />
      </clipPath>
    </defs>
    <path d="M537 241H675A98 183 0 0 1 675 607H537A102 183 0 0 1 537 241z" fill="url(#tread)" stroke="#0c0c0c" />
    <g clipPath="url(#body)">
      <path d="M543 246A95 178 0 0 0 543 602" stroke="#4a4a4a" strokeWidth="5" fill="none" opacity=".5" filter="url(#soft)" />
      <ellipse cx="684" cy="424" rx="91" ry="181" fill="url(#wall)" filter="url(#soft)" />
      <path d="M690 247Q676 246 662 252A93 177 0 0 0 590 440" stroke="url(#shine)" strokeWidth="8" fill="none" filter="url(#soft)" />
      <g fill="none" stroke="#050505" strokeWidth="1.400">
        {grooves.map(([x, r]) => <path key={x} d={treadLine(x, r)} />)}
      </g>
      <path d="M575 257Q517 330 517 424T571 588" fill="none" stroke="#176a9b" strokeWidth="1.600" />
      <g stroke="#080808">
        <g transform="translate(430 230) scale(.3333)">
          {upperLines.map(d => <path key={d} d={d} fill="none" strokeWidth="5" />)}
          {upperSpurs.map(d => <path key={d} d={d} fill="#1a1a1a" strokeWidth="4" />)}
        </g>
        <g transform="translate(430 415) scale(.3333)">
          {lowerLines.map(d => <path key={d} d={d} fill="none" strokeWidth="5" />)}
          {lowerSpurs.map(d => <path key={d} d={d} fill="#1a1a1a" strokeWidth="4" />)}
        </g>
      </g>
      <path d="M478 463Q496 472 503 492M493 530Q515 538 523 550" fill="none" stroke="#5a5a5a" strokeWidth=".8" />
    </g>
    <g clipPath="url(#hole)">
      {rings.map(([cx, rx, ry], i) => (
        <ellipse key={cx} cx={cx} cy="424" rx={rx} ry={ry} stroke="#060606"
          fill={i === rings.length - 1 ? 'url(#bore)' : 'url(#bead)'} />
      ))}
      <g fill="none" stroke="#0a0a0a">
        <path d="M630 318Q649 362 649 424T632 528" />
        <path d="M613 352Q623 380 623 424T615 492" />
        <path d="M609 370q8 54 0 108" strokeWidth="3" />
      </g>
    </g>
    <ellipse cx="687" cy="424" rx="80" ry="160" fill="none" stroke="#060606" strokeWidth="1.400" />
  </svg>
);

const Triad = () => (
  <svg width="44" height="48" viewBox="0 516 44 48" role="img" aria-label="Axes">
    <path d="M38 558V532" stroke="#2c8c34" strokeWidth="3" />
    <path d="M38 526l-4 10h8z" fill="#14681c" />
    <path d="M39 558H28" stroke="#9c2020" strokeWidth="3" />
    <circle cx="27" cy="558" r="4" fill="#c4191c" />
    <path d="M12 558l9-4v8z" fill="#1b1b8c" />
    <path d="M20 555l4 6M24 555l-4 6" stroke="#a02078" />
    <text x="34" y="525" fontSize="10" fill="#1c7c24" fontFamily="Roboto, sans-serif">Y</text>
    <text x="5" y="562" fontSize="11" fill="#2020a0" fontFamily="Roboto, sans-serif">Z</text>
  </svg>
);

const navGlyphs = ['M3 2v8M10 2L5 6l5 4z', 'M9 2L4 6l5 4z', 'M4 2l5 4-5 4z', 'M3 2l5 4-5 4zM10 2v8'];

function App() {
  const [activeTab, setActiveTab] = useState('Direct Editing');
  const [query, setQuery] = useState('');

  return (
    <Page>
      <GlobalStyle />
      <TitleBar>
        <Brand>
          <svg width="21" height="22" viewBox="0 0 21 22" aria-hidden="true">
            <path d="M1 5L8 1l12 3v13l-8 4-11-4z" fill="#c8201f" />
            <path d="M1 5L8 1l12 3-8 4z" fill="#ef6a5c" />
            <path d="M12 8l8-4v13l-8 4z" fill="#94100f" />
            <path d="M9 9.500q-5-2-5 .5t4 3-4 2.500M12.500 9l1.500 8 2-6 1 5 2-10" fill="none" stroke="#fff" strokeWidth="1.600" />
          </svg>
          <span><b>Solid</b>Works</span>
        </Brand>
        <MenuBar>
          {menus.map(name => <MenuItem key={name}>{name}</MenuItem>)}
          <PinButton aria-label="Pin menu"><Icon name="pin" /></PinButton>
        </MenuBar>
        <QuickBar>
          <Tools items={['newDoc', 'v', 'open', 'v', 'save', 'v', 'print', 'v']} dropWidth={13} />
          <IconButton aria-label="Undo"><Icon name="undo" /></IconButton>
          <DropButton $width={12} $muted aria-label="Undo list" />
          <SelectGroup>
            <IconButton aria-label="Select"><Icon name="cursor" /></IconButton>
            <DropButton $width={12} aria-label="Select options" />
          </SelectGroup>
          <Tools items={['traffic', 'properties', 'options', 'v']} dropWidth={12} />
        </QuickBar>
        <DocTitle>tyre part 2</DocTitle>
        <SearchBox>
          <Icon name="helpBubble" />
          <input type="text" aria-label="Search SolidWorks Help" placeholder="Search SolidWorks Help"
            value={query} onChange={e => setQuery(e.target.value)} />
          <Icon name="search" size={18} />
          <DropButton $width={14} aria-label="Search options" />
        </SearchBox>
        <WindowButtons>
          <Tools items={['question', 'v', 'minimize', 'restore', 'close']} dropWidth={13} />
        </WindowButtons>
      </TitleBar>

      <Dock>
        <DockRow>
          <Toolbar><Grip /><Tools items={viewTools} small /></Toolbar>
          <Toolbar><Grip /><Tools items={standardViews} /></Toolbar>
        </DockRow>
        <DockRow>
          <Toolbar><Grip /><Tools items={noteTools} /></Toolbar>
        </DockRow>
      </Dock>

      <Ribbon>
        {ribbon.map((item, i) => item ? (
          <RibbonButton key={i} $tall={item.menu} disabled={item.disabled}>
            <Icon name={item.icon} />
            {item.label}
            {item.menu && <RibbonArrow />}
          </RibbonButton>
        ) : <RibbonDivider key={i} />)}
        <Watermark width="73" height="70" viewBox="30 18 220 210" aria-hidden="true">
          <g fill="#d9dde9">
            <path d="M105 28Q185 20 187 45Q188 80 108 112Q160 75 162 52Q160 32 105 36z" />
            <path d="M55 132Q140 118 150 150Q150 200 38 224L82 152L98 152L66 206Q130 190 125 158Q120 138 55 138z" />
            <path d="M240 100Q168 92 162 118Q160 130 195 155Q215 170 210 190Q200 215 130 202Q180 208 190 192Q195 175 172 155Q145 135 148 118Q155 90 240 100z" />
          </g>
        </Watermark>
      </Ribbon>

      <Workspace>
        <ModelColumn>
          <Viewport>
            <TabRow>
              {tabs.map(name => (
                <CommandTab key={name} $active={name === activeTab} onClick={() => setActiveTab(name)}>
                  {name}
                </CommandTab>
              ))}
              <ModelWindowButtons>
                <Tools items={['minimize', 'restore', 'close']} />
              </ModelWindowButtons>
            </TabRow>
            <HeadsUpBar>
              <Tools items={headsUp} dropWidth={10} />
            </HeadsUpBar>
            <Scene>
              <SceneEdge>
                <PanelHandle aria-label="Show panel"><span /><span /><span /></PanelHandle>
                <Triad />
              </SceneEdge>
              <Stage><Tyre /></Stage>
              <SideTabs>
                {sideTabs.map(name => (
                  <SideTab key={name} $active={name === 'sphere'} aria-label={name}><Icon name={name} /></SideTab>
                ))}
              </SideTabs>
            </Scene>
          </Viewport>
          <StudyRow>
            {navGlyphs.map(d => (
              <StudyNav key={d} aria-label="Scroll tabs">
                <svg width="12" height="12"><path d={d} fill="#8b8ea4" stroke="#8b8ea4" /></svg>
              </StudyNav>
            ))}
            <StudyTab $active>Model</StudyTab>
            <StudyTab>Motion Study 1</StudyTab>
          </StudyRow>
        </ModelColumn>
        <RenderPanel>
          <RenderTools>
            <RenderGrip />
            <Tools items={renderTools} />
          </RenderTools>
          <HintEdge />
        </RenderPanel>
      </Workspace>

      <BottomBar>
        <Toolbar $end={9}>
          <Grip />
          <Tools items={['funnelOff', 'funnelsOff', 'funnels']} />
          <SelectGroup>
            <IconButton aria-label="Select"><Icon name="cursor" /></IconButton>
            <DropButton $width={12} $small aria-label="Select options" />
          </SelectGroup>
          <Tools items={['cursorsOff', '|', ...filters]} />
        </Toolbar>
        <Toolbar><Grip /><Tools items={snaps} /></Toolbar>
      </BottomBar>
      <StatusBar>
        SolidWorks Student Design Kit - Academic Use Only
        <StatusMode>Editing Part</StatusMode>
        <StatusIcon $gap={26} aria-label="Quick tips">
          <svg width="14" height="14" aria-hidden="true">
            <path d="M.5 .5h13v13H.5z" fill="#e8fbe8" stroke="#1c3f86" />
            <path d="M4.500 5q0-2 2.500-2t2.500 2q0 1-2.500 2.500V9M7 10v2" fill="none" stroke="#109020" strokeWidth="2" />
          </svg>
        </StatusIcon>
        <StatusIcon $gap={50} aria-label="Tags">
          <svg width="16" height="16" aria-hidden="true">
            <path d="M1 9l8-7 4-.5 2 3-1 4-8 7z" fill="#fbc928" stroke="#8b5a00" />
            <circle cx="11" cy="5" r="1.500" fill="#fff" stroke="#8b5a00" />
            <path d="M5 9l4 3M7 7l4 3" stroke="#8b5a00" />
          </svg>
        </StatusIcon>
      </StatusBar>
    </Page>
  );
}

export default App;
